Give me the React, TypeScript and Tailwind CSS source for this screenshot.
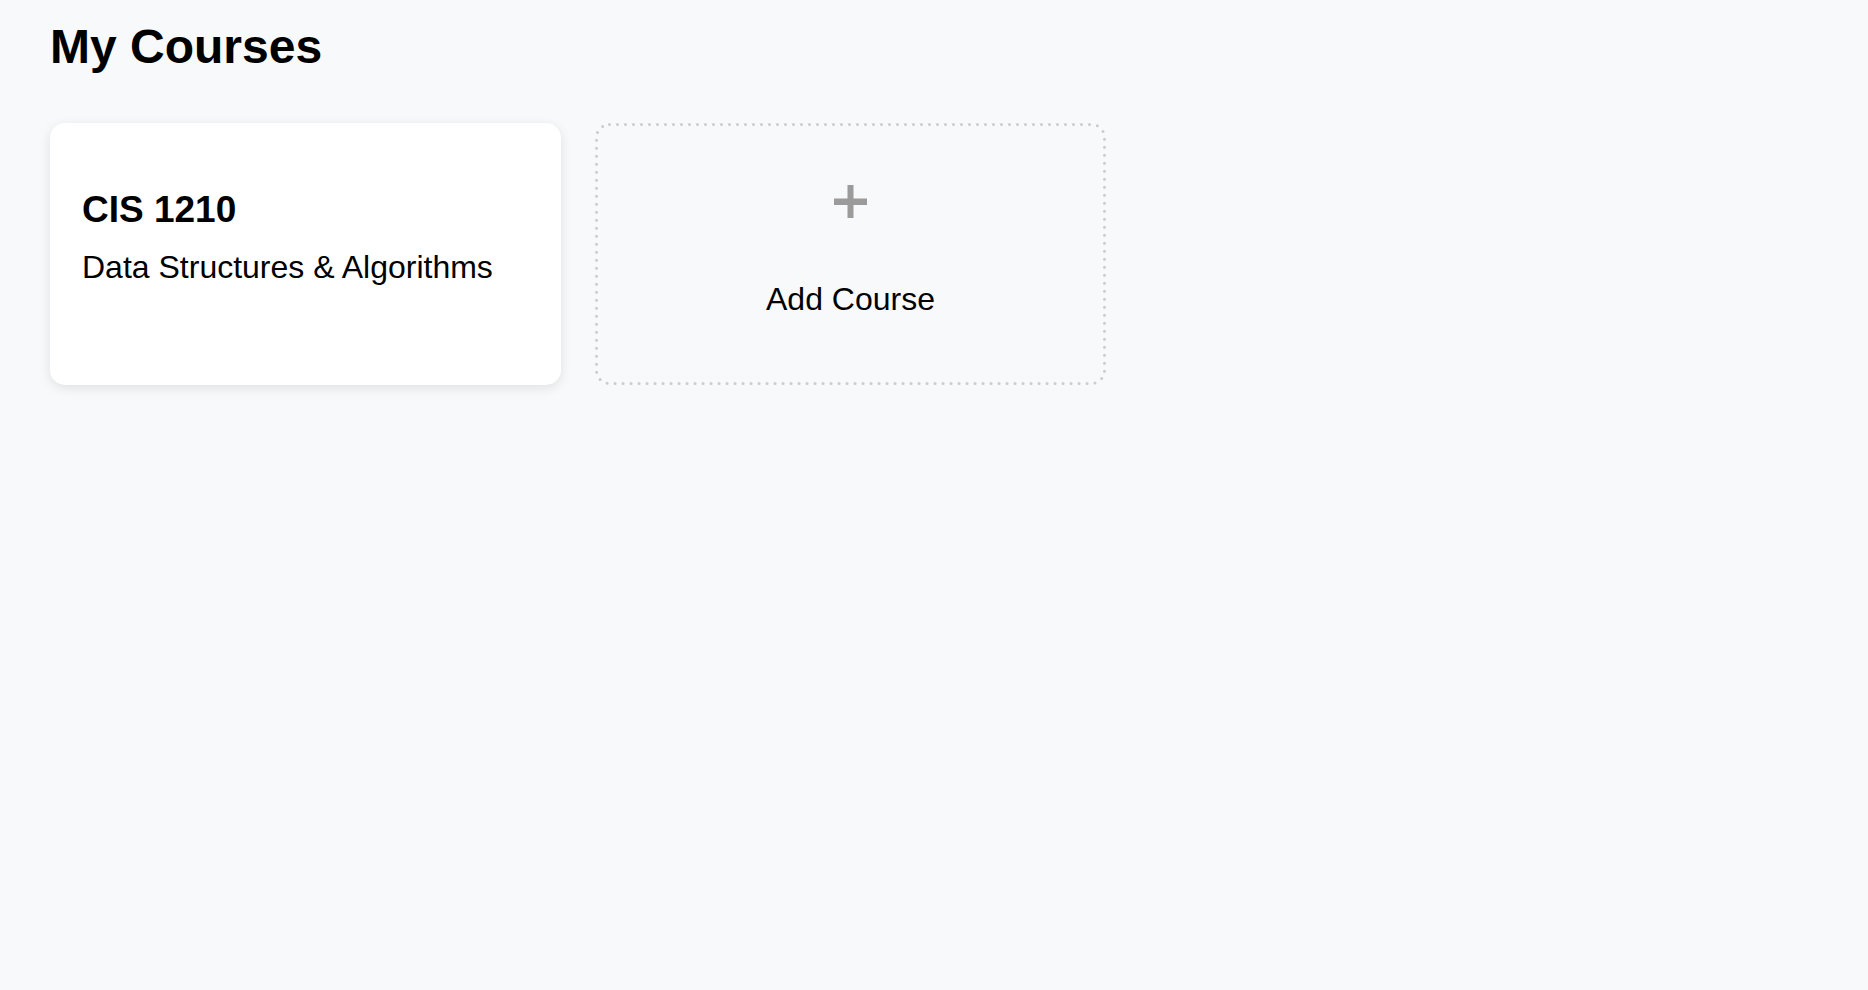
import React from 'react';

type Course = { code: string; title: string };

const courses: Course[] = [{ code: 'CIS 1210', title: 'Data Structures & Algorithms' }];

function CourseCard({ course }: { course: Course }) {
  return (
    <div className="flex h-[262px] w-[511px] flex-col rounded-[15px] bg-white px-[32px] pt-[68px] shadow-[0_3px_12px_rgba(0,0,0,0.1)]">
      <h2 className="text-[37px] font-bold leading-none text-black">{course.code}</h2>
      <p className="mt-[23px] text-[32px] leading-none text-black">{course.title}</p>
    </div>
  );
}

function DottedOutline() {
  // sparse round dots, like the original outline
  return (
    <svg className="pointer-events-none absolute inset-0 h-full w-full" aria-hidden="true">
      <rect
        x="1.5"
        y="1.5"
        width="calc(100% - 3px)"
        height="calc(100% - 3px)"
        rx="13"
        fill="none"
        stroke="#c9ccd1"
        strokeWidth="3"
        strokeLinecap="round"
        strokeDasharray="0 8"
      />
    </svg>
  );
}

function AddCourseCard() {
  return (
    <button className="relative flex h-[262px] w-[511px] flex-col items-center rounded-[14px] pt-[62px] text-black">
      <DottedOutline />
      <svg width="33" height="33" viewBox="0 0 33 33" aria-hidden="true">
        <rect x="13.5" y="0" width="6" height="33" fill="#9b9b9b" />
        <rect x="0" y="13.5" width="33" height="6.5" fill="#9b9b9b" />
      </svg>
      <span className="mt-[65px] text-[32px] leading-none">Add Course</span>
    </button>
  );
}

export default function App() {
  return (
    <div className="min-h-screen bg-[#f8f9fa] pl-[50px] pt-[23px] font-['Liberation_Sans',Arial,sans-serif]">
      <h1 className="text-[48px] font-bold leading-none text-black">My Courses</h1>

      <div className="mt-[52px] flex gap-[34px]">
        {courses.map((c) => (
          <CourseCard key={c.code} course={c} />
        ))}
        <AddCourseCard />
      </div>
    </div>
  );
}
